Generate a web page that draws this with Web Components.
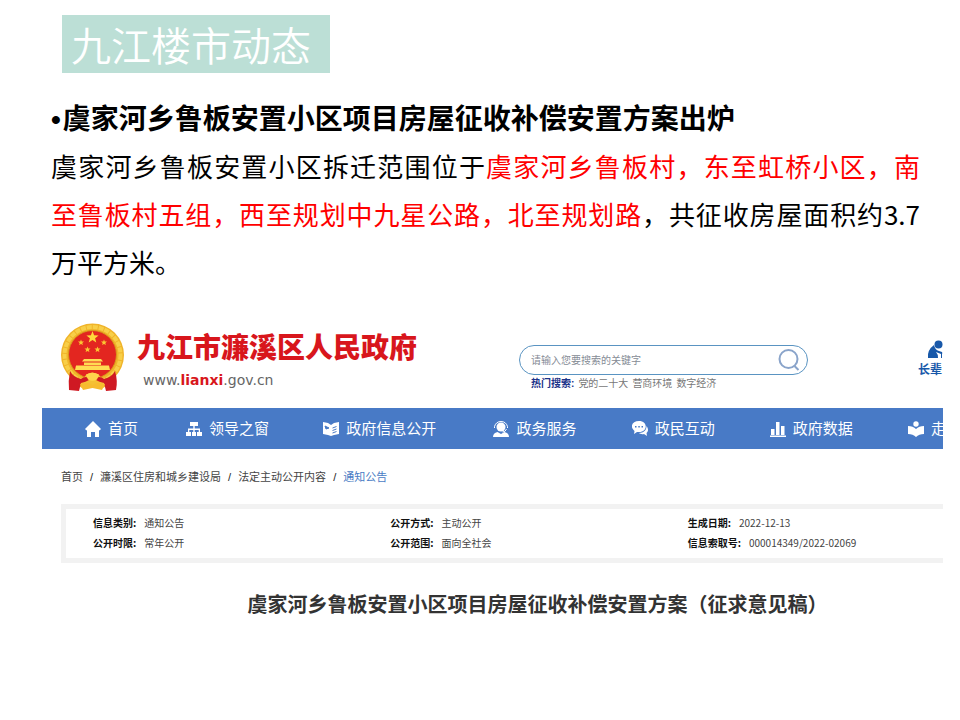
<!DOCTYPE html>
<html lang="zh-CN">
<head>
<meta charset="utf-8">
<title>九江楼市动态</title>
<style>
body { margin: 0; background: #fff; color: #000; font-family: "Liberation Sans", "Noto Sans CJK SC", sans-serif; }
</style>
</head>
<body>
<slide-page>
  <slide-title slot="title">九江楼市动态</slide-title>
  <slide-story></slide-story>
  <site-frame></site-frame>
</slide-page>
<script>
function define(name, html) {
  const template = document.createElement('template');
  template.innerHTML = html;
  customElements.define(name, class extends HTMLElement {
    constructor() {
      super();
      this.attachShadow({ mode: 'open' }).append(template.content.cloneNode(true));
    }
  });
}

define('slide-page', `
<style>
:host { display: block; padding-top: 15px; }
header { padding-left: 62px; display: flex; }
main { padding-top: 25px; }
</style>
<header><slot name="title"></slot></header>
<main><slot></slot></main>`);

define('slide-title', `
<style>
:host { display: block; background: #bcdfd6; }
h1 { margin: 0; padding: 0 19px 0 9px; color: #fff; font: 350 40px/58px "Noto Sans CJK SC DemiLight", "Noto Sans CJK SC", sans-serif; }
</style>
<h1><slot></slot></h1>`);

define('slide-story', `
<style>
:host { display: block; padding: 0 40px 0 51px; }
h2 { display: flex; gap: 2px; margin: 0; font-size: 28px; font-weight: 700; line-height: 44px; white-space: nowrap; }
p { margin: 0; font: 26px/48px "Noto Sans CJK SC", sans-serif; }
.line { display: block; text-align: justify; text-align-last: justify; white-space: nowrap; }
.last { text-align-last: left; }
em { font-style: normal; color: #f00; }
</style>
<h2><span>•</span><span>虞家河乡鲁板安置小区项目房屋征收补偿安置方案出炉</span></h2>
<p><span class="line">虞家河乡鲁板安置小区拆迁范围位于<em>虞家河乡鲁板村，东至虹桥小区，南</em></span><span class="line"><em>至鲁板村五组，西至规划中九星公路，北至规划路</em>，共征收房屋面积约3.7</span><span class="line last">万平方米。</span></p>`);

define('state-emblem', `
<style>
:host { display: block; width: 64px; height: 70px; }
svg { display: block; width: 100%; height: 100%; }
</style>
<svg viewBox="0 0 64 70" aria-hidden="true">
<circle cx="31.500" cy="32" r="31.500" fill="#f0b42a"/>
<circle cx="31.500" cy="32" r="28" fill="none" stroke="#f8cf48" stroke-width="4" stroke-dasharray="5 1"/>
<circle cx="31.500" cy="31.500" r="24" fill="#e32620" stroke="#d99a1c"/>
<path d="M31.500 8l1.600 4.200 4.500.2-3.500 2.800 1.200 4.300-3.800-2.400-3.800 2.400 1.200-4.300-3.500-2.800 4.500-.2z" fill="#ffd93b"/>
<g fill="#fbc832"><path id="t" d="M20 16.500l.8 2 2.200.1-1.700 1.400.6 2.100-1.900-1.200-1.900 1.200.6-2.100-1.700-1.400 2.200-.1z"/>
<use href="#t" x="23"/><use href="#t" x="6.500" y="7"/><use href="#t" x="16.500" y="7"/></g>
<path d="M23 36h17l2 2.500H21zM23 39.500h17V42H23zM15 42.500h33l1 4.500H14z" fill="#ffdc52"/>
<path d="M9 48l3 4q6 5 10 4l3-4q6-5 13 0l3 4q5 1 10-4l3-4-2 11-10 6H21l-10-6z" fill="#f5c034"/>
<path d="M9 48Q7 58 8 67l10 1 2-8q5-1 8-3h7q3 2 8 3l2 8 10-1q2-9-1-19-3 6-11 8-2-2-5-2-3 2-6.500 2T25 54q-3 0-5 2-8-2-11-8z" fill="#cf1923"/>
<path d="M25 51.500q6.500-3.500 13 0l-2 5q-4.500 2.500-9 0z" fill="#ffd54c"/>
<path d="M19 61l8-1 4.500 2 4.500-2 8 1-3 6-9.500-2-9.500 2z" fill="#f7bb2f"/>
</svg>`);

define('site-brand', `
<style>
:host { display: flex; gap: 12px; }
.name { color: #d8161c; font-size: 28px; font-weight: 900; line-height: 40px; padding-top: 6px; white-space: nowrap; }
.url { display: block; margin-left: 6px; color: #666; font: 14px/22px "DejaVu Sans", sans-serif; text-decoration: none; }
b { color: #d8161c; }
</style>
<state-emblem></state-emblem>
<div><div class="name">九江市濂溪区人民政府</div><a class="url" href="#">www.<b>lianxi</b>.gov.cn</a></div>`);

define('site-search', `
<style>
:host { display: block; }
form { display: flex; align-items: center; box-sizing: border-box; height: 30px; border: 1px solid #5a94c2; border-radius: 15px; padding: 0 7px 0 11px; }
input { flex: 1; min-width: 0; border: 0; padding: 0; outline: 0; background: none; font: 10px/20px "Noto Sans CJK SC", sans-serif; }
input::placeholder { color: #858b95; opacity: 1; }
button { border: 0; padding: 0; background: none; width: 22px; height: 24px; }
svg { display: block; }
p { margin: 0 0 0 12px; display: flex; gap: 4px; font-size: 10px; line-height: 18px; color: #777; white-space: nowrap; }
b { color: #1b3389; }
a { color: inherit; text-decoration: none; }
</style>
<form><input type="text" placeholder="请输入您要搜索的关键字" aria-label="搜索"><button type="button" aria-label="搜索"><svg width="22" height="24" viewBox="0 0 22 24" fill="none" stroke="#8aa4ca" stroke-width="2"><circle cx="10.500" cy="11" r="9"/><path d="M16.500 18l4 4"/></svg></button></form>
<p><b>热门搜索:</b><a href="#">党的二十大</a><a href="#">营商环境</a><a href="#">数字经济</a></p>`);

define('elder-link', `
<style>
:host { display: block; }
a { display: block; color: #1858a9; font-size: 12px; font-weight: 700; line-height: 20px; text-decoration: none; white-space: nowrap; }
svg { display: block; margin-left: 9px; }
</style>
<a href="#"><svg width="18" height="20" viewBox="0 0 18 20" fill="#1858a9" aria-hidden="true"><circle cx="11.500" cy="4.500" r="4"/><path d="M7 5q1 5 5 6l3 1q1 2-1 2l-5-2q2 2 2 6H1q-1-8 6-13z"/><path d="M14.500 18v-5" fill="none" stroke="#1858a9"/></svg>长辈</a>`);

define('nav-item', `
<style>
:host { display: block; }
a { display: flex; align-items: center; gap: 7px; color: #fff; font-size: 15px; line-height: 41px; text-decoration: none; white-space: nowrap; }
::slotted(svg) { flex: none; width: 16px; height: 16px; fill: #fff; }
</style>
<a href="#"><slot name="icon"></slot><slot></slot></a>`);

define('site-nav', `
<style>
:host { display: block; background: #487ac6; }
nav { display: grid; grid-template-columns: 101fr 137fr 170fr 138fr 138fr 138fr 125fr; padding-left: 43px; }
</style>
<nav>
<nav-item><svg slot="icon" viewBox="0 0 16 16"><path d="M8 0l8 8-1.500 1.500L14 9v7h-4v-5H6v5H2V9l-.5.500L0 8z"/></svg>首页</nav-item>
<nav-item><svg slot="icon" viewBox="0 0 16 16"><path d="M4 1h8v4H8.700v2.500H14V11h2v4h-5v-4h1.700V9H8.700v2h1.300v4H6v-4h1.300V9h-4v2H5v4H0v-4h2V7.500h5.300V5H4z"/></svg>领导之窗</nav-item>
<nav-item><svg slot="icon" viewBox="0 0 16 16"><path d="M0 1l5 1 3 2 3-2 5-1v12l-5 1-3 1-3-1-5-1z"/><path d="M2 5l4 2-3 1zM9.500 7l4-1.500M9.500 9.500l4-1.500M9.500 12l4-1.500" stroke="#487ac6" fill="#487ac6"/></svg>政府信息公开</nav-item>
<nav-item><svg slot="icon" viewBox="0 0 16 16"><circle cx="8" cy="6" r="4.500"/><path d="M1.500 7V5.500Q3 .5 8 .5t6.500 5V7M13.500 8q-1 3-4 3" fill="none" stroke="#fff"/><path d="M0 16q0-4 4.500-5L8 13l3.500-2q4.500 1 4.500 5z"/></svg>政务服务</nav-item>
<nav-item><svg slot="icon" viewBox="0 0 16 16"><path d="M7 0c9 0 9 11 0 11H5l-3 2 .5-3C-2.500 6 0 0 7 0zM14.500 5c2 3 2 5 0 7l.5 3-3-2c-2 .5-4 0-5-1 5 0 7.500-3 7.500-7z"/><path d="M3 5h1.500v1.500H3zM6.300 5h1.500v1.500H6.300zM9.500 5H11v1.500H9.500z" fill="#487ac6"/></svg>政民互动</nav-item>
<nav-item><svg slot="icon" viewBox="0 0 16 16"><path d="M0 14.500h16V16H0zM1 8h3.500v6H1zM6 1h3.500v13H6zM11 5h3.500v9H11z"/></svg>政府数据</nav-item>
<nav-item><svg slot="icon" viewBox="0 0 16 16"><circle cx="8" cy="3" r="2.700"/><path d="M0 5q5 0 8 3 3-3 8-3v8q-5 0-8 3-3-3-8-3z"/></svg>走</nav-item>
</nav>`);

define('bread-crumb', `
<style>
:host { display: block; }
nav { display: flex; gap: 7px; font-size: 11px; line-height: 20px; color: #222; white-space: nowrap; }
a { color: #444; text-decoration: none; }
a[aria-current] { color: #4a7cc4; }
</style>
<nav><a href="#">首页</a><span>/</span><a href="#">濂溪区住房和城乡建设局</a><span>/</span><a href="#">法定主动公开内容</a><span>/</span><a href="#" aria-current="page">通知公告</a></nav>`);

define('info-field', `
<style>
:host { display: flex; gap: 8px; font: 10px/20px "Noto Sans CJK SC", sans-serif; white-space: nowrap; color: #444; }
b { color: #111; }
</style>
<b><slot name="label"></slot></b><span><slot></slot></span>`);

define('info-box', `
<style>
:host { display: grid; grid-template-columns: repeat(3, 1fr); border: 5px solid #f2f2f2; padding: 4px 24px 5px 27px; }
</style>
<info-field><span slot="label">信息类别:</span>通知公告</info-field>
<info-field><span slot="label">公开方式:</span>主动公开</info-field>
<info-field><span slot="label">生成日期:</span>2022-12-13</info-field>
<info-field><span slot="label">公开时限:</span>常年公开</info-field>
<info-field><span slot="label">公开范围:</span>面向全社会</info-field>
<info-field><span slot="label">信息索取号:</span>000014349/2022-02069</info-field>`);

define('site-frame', `
<style>
:host { display: block; margin: 0 17px 0 42px; overflow: hidden; }
.site { width: 110%; }
header { display: grid; grid-template-columns: 458fr 289fr 110fr 96fr; padding: 37px 19px 15px; }
site-search { padding-top: 22px; }
elder-link { grid-column: 4; padding-top: 17px; }
article { padding: 18px 19px 0; }
info-box { margin-top: 17px; }
h3 { margin: 27px 0 0; text-align: center; color: #333; font-size: 20px; line-height: 30px; white-space: nowrap; }
</style>
<div class="site">
<header><site-brand></site-brand><site-search></site-search><elder-link></elder-link></header>
<site-nav></site-nav>
<article><bread-crumb></bread-crumb><info-box></info-box><h3>虞家河乡鲁板安置小区项目房屋征收补偿安置方案（征求意见稿）</h3></article>
</div>`);
</script>
</body>
</html>
